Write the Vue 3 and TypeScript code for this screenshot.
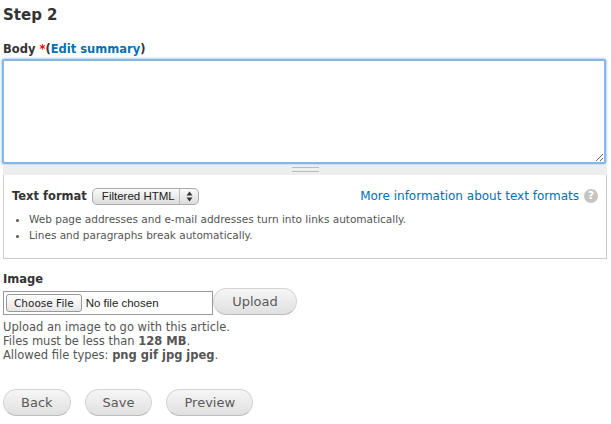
<template>
  <form class="page" @submit.prevent>
    <h2 class="step-title">Step 2</h2>

    <div class="field-body">
      <label class="field-label" for="body">
        Body <span class="required">*</span><span class="summary">(<a href="#">Edit summary</a>)</span>
      </label>
      <textarea id="body" class="body-input"></textarea>
      <div class="grippie"></div>
    </div>

    <fieldset class="filter-wrapper">
      <div class="filter-top">
        <div class="filter-select">
          <span class="filter-label">Text format</span>
          <div class="mac-select">
            <span class="mac-select-text">Filtered HTML</span>
            <span class="mac-select-arrows">
              <svg width="7" height="11" viewBox="0 0 7 11">
                <path d="M3.5 0.5 L6.5 4.5 H0.5 Z M3.5 10.5 L0.5 6.5 H6.5 Z" fill="#333" />
              </svg>
            </span>
          </div>
        </div>
        <div class="filter-help">
          <a href="#">More information about text formats</a>
          <span class="help-icon">?</span>
        </div>
      </div>
      <ul class="filter-tips">
        <li v-for="tip in tips" :key="tip">{{ tip }}</li>
      </ul>
    </fieldset>

    <div class="field-image">
      <div class="field-label">Image</div>
      <div class="upload-row">
        <div class="file-box">
          <button type="button" class="choose-btn">Choose File</button>
          <span class="file-status">No file chosen</span>
        </div>
        <button type="button" class="btn upload-btn">Upload</button>
      </div>
      <div class="description">
        Upload an image to go with this article.<br />
        Files must be less than <strong>128 MB</strong>.<br />
        Allowed file types: <strong>png gif jpg jpeg</strong>.
      </div>
    </div>

    <div class="actions">
      <button v-for="action in actions" :key="action" type="button" class="btn">{{ action }}</button>
    </div>
  </form>
</template>

<script setup lang="ts">
const tips: string[] = [
  'Web page addresses and e-mail addresses turn into links automatically.',
  'Lines and paragraphs break automatically.',
];

const actions: string[] = ['Back', 'Save', 'Preview'];
</script>

<style scoped>
.page {
  width: 611px;
  height: 424px;
  overflow: hidden;
  box-sizing: border-box;
  padding: 0 4px 0 3px;
  font-family: "DejaVu Sans", Verdana, sans-serif;
  font-size: 11px;
  line-height: 14px;
  color: #3b3b3b;
  background: #fff;
}

a {
  color: #0071b3;
  text-decoration: none;
}

.step-title {
  margin: 0;
  padding-top: 5px;
  height: 39px;
  box-sizing: border-box;
  font-size: 15px;
  line-height: 20px;
  font-weight: 700;
  color: #333;
}

.field-label {
  display: block;
  font-size: 11.5px;
  line-height: 14px;
  font-weight: 700;
  color: #333;
}

.required {
  color: #f00;
}

.summary {
  font-weight: 700;
}

.field-body .field-label {
  margin-bottom: 3px;
}

.field-body {
  margin-top: 3px;
}

.body-input {
  display: block;
  width: 604px;
  height: 105px;
  margin-left: -1px;
  box-sizing: border-box;
  border: 2px solid #85b6e8;
  border-radius: 2px;
  box-shadow: 0 0 3px #6ea6e0;
  outline: none;
  padding: 2px;
  background: #fff;
}

.grippie {
  height: 10px;
  margin-top: 1px;
  background: #eee;
  position: relative;
}

.grippie::after {
  content: "";
  position: absolute;
  left: 289px;
  top: 2px;
  width: 27px;
  height: 1px;
  border-top: 1px solid #bbb;
  border-bottom: 1px solid #bbb;
  box-shadow: 0 2px 0 -0px transparent;
  padding-bottom: 2px;
}

.filter-wrapper {
  margin: -1px 0 0;
  padding: 12px 8px 0;
  height: 85px;
  box-sizing: border-box;
  border: 1px solid #ccc;
  min-width: 0;
}

.filter-top {
  display: flex;
  align-items: center;
  justify-content: space-between;
  height: 18px;
}

.filter-select {
  display: flex;
  align-items: center;
  gap: 5px;
}

.filter-label {
  font-size: 11.5px;
  font-weight: 700;
  color: #333;
}

.mac-select {
  display: flex;
  align-items: stretch;
  height: 17px;
  box-sizing: border-box;
  border: 1px solid #aaa;
  border-radius: 5px;
  background: linear-gradient(#fafafa, #dcdcdc);
  font-family: "Liberation Sans", Arial, sans-serif;
  font-size: 11.5px;
  line-height: 15px;
  color: #222;
}

.mac-select-text {
  padding: 0 4px 0 9px;
}

.mac-select-arrows {
  display: flex;
  align-items: center;
  padding: 0 5px 0 6px;
  border-left: 1px solid #bbb;
}

.filter-help {
  display: flex;
  align-items: center;
  gap: 5px;
  font-size: 12px;
}

.help-icon {
  width: 14px;
  height: 14px;
  border-radius: 50%;
  background: #c4c4c4;
  color: #fff;
  font-size: 11px;
  line-height: 14px;
  font-weight: 700;
  text-align: center;
}

.filter-tips {
  margin: 6px 0 0;
  padding: 0 0 0 17px;
  font-size: 10.5px;
  line-height: 16px;
  color: #555;
}

.field-image {
  margin-top: 13px;
}

.upload-row {
  display: flex;
  align-items: flex-end;
  margin-top: 2px;
}

.file-box {
  display: flex;
  align-items: center;
  gap: 4px;
  width: 210px;
  height: 24px;
  box-sizing: border-box;
  border: 1px solid #999;
  padding: 0 2px;
  font-family: "Liberation Sans", Arial, sans-serif;
  font-size: 11.5px;
  color: #222;
}

.choose-btn {
  height: 18px;
  padding: 0 7px;
  border: 1px solid #999;
  border-radius: 3px;
  background: linear-gradient(#fff, #e6e6e6);
  font-family: "DejaVu Sans", Verdana, sans-serif;
  font-size: 10.5px;
  line-height: 16px;
  color: #222;
}

.file-status {
  white-space: nowrap;
}

.btn {
  height: 27px;
  padding: 0 17px;
  border: 1px solid #d4d4d4;
  border-bottom-color: #bbb;
  border-radius: 14px;
  background: linear-gradient(#f6f6f6, #e0e0e0);
  font-family: "DejaVu Sans", Verdana, sans-serif;
  font-size: 13px;
  color: #5a5a5a;
}

.upload-btn {
  width: 84px;
  padding: 0;
}

.description {
  margin-top: 5px;
  font-size: 11.5px;
  line-height: 14px;
  color: #555;
}

.description strong {
  color: #555;
}

.actions {
  display: flex;
  gap: 14px;
  margin-top: 27px;
}
</style>
